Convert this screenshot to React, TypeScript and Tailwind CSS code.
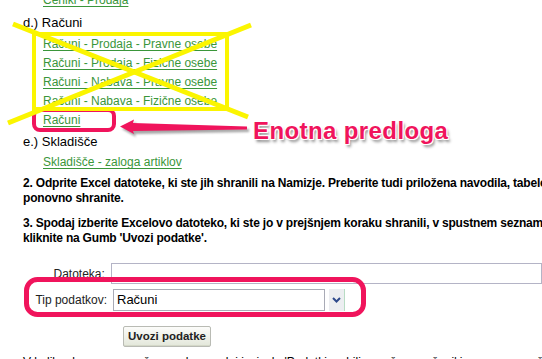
import type { ReactNode } from "react";

const links = [
  "Računi - Prodaja - Pravne osebe",
  "Računi - Prodaja - Fizične osebe",
  "Računi - Nabava - Pravne osebe",
  "Računi - Nabava - Fizične osebe",
  "Računi",
];

function Link({ children }: { children: ReactNode }) {
  return <a className="text-[#3a963a] underline underline-offset-[2px] cursor-pointer">{children}</a>;
}

// ── Annotation layer (yellow cross-out, pink highlights, arrow) ──
function Annotations() {
  return (
    <svg className="absolute inset-0 pointer-events-none" width="542" height="359" viewBox="0 0 542 359">
      <defs>
        <filter id="blur" x="-10%" y="-50%" width="120%" height="200%">
          <feGaussianBlur stdDeviation="1.2" />
        </filter>
      </defs>
      {/* pink boxes */}
      <rect x="34" y="110" width="80" height="20" rx="6" fill="none" stroke="#f0145c" strokeWidth="4" />
      <rect x="26.5" y="279.5" width="337" height="35" rx="11" fill="none" stroke="#f0145c" strokeWidth="5" />
      {/* yellow cross */}
      <rect x="34" y="34" width="193" height="75" fill="none" stroke="#fbf500" strokeWidth="4" />
      <line x1="13" y1="24" x2="248" y2="117" stroke="#fbf500" strokeWidth="5" />
      <line x1="251" y1="25" x2="8" y2="123" stroke="#fbf500" strokeWidth="5" />
      {/* arrow */}
      <polygon
        points="122,129 136,122 135,126 249,129 249,132 135,134 136,137"
        fill="rgba(0,0,0,0.35)"
        filter="url(#blur)"
      />
      <polygon points="120,126.5 134,119.5 133,123 247,126.5 247,129.5 133,131 134,134" fill="#f0145c" />
    </svg>
  );
}

export default function App() {
  return (
    <div className="relative w-[542px] h-[359px] overflow-hidden bg-white text-black font-['Liberation_Sans',Arial,sans-serif]">
      <div className="mt-[-9px]">
        <div className="pl-[43px] text-[12px] leading-[19px]">
          <Link>Ceniki - Prodaja</Link>
        </div>
        <div className="mt-[3px] pl-[23px] text-[13px] leading-[19px]">d.) Računi</div>
        <div className="mt-[3px] pl-[43px] text-[12px] leading-[19px] flex flex-col items-start">
          {links.map((l) => (
            <Link key={l}>{l}</Link>
          ))}
        </div>
        <div className="mt-[2px] pl-[23px] text-[13px] leading-[19px]">e.) Skladišče</div>
        <div className="mt-[2px] pl-[43px] text-[12px] leading-[19px]">
          <Link>Skladišče - zaloga artiklov</Link>
        </div>

        <p className="mt-[4px] pl-[23px] font-bold text-[12px] tracking-[-0.2px] leading-[15px] whitespace-nowrap">
          2. Odprite Excel datoteke, ki ste jih shranili na Namizje. Preberite tudi priložena navodila, tabele izpolnite in jih
          <br />
          ponovno shranite.
        </p>
        <p className="mt-[10px] pl-[23px] font-bold text-[12px] tracking-[-0.2px] leading-[15px] whitespace-nowrap">
          3. Spodaj izberite Excelovo datoteko, ki ste jo v prejšnjem koraku shranili, v spustnem seznamu izberite tip podatkov in
          <br />
          kliknite na Gumb 'Uvozi podatke'.
        </p>

        {/* Form */}
        <div className="mt-[17px] flex items-center gap-[6px] text-[12px]">
          <label className="w-[107px] text-right text-[#222]">Datoteka:</label>
          <div className="h-[21px] w-[440px] border border-[#b4b4c6] bg-white" />
        </div>
        <div className="mt-[5px] flex items-center gap-[6px] text-[12px]">
          <label className="w-[107px] text-right text-[#222]">Tip podatkov:</label>
          <div className="flex items-center gap-[4px]">
            <div className="h-[22px] w-[212px] border border-[#a9abb6] bg-white pl-[3px] text-[13px] leading-[20px]">Računi</div>
            <div className="h-[22px] w-[16px] bg-[#eceef1] border-r border-[#b8dcc4] flex items-center justify-center">
              <svg width="9" height="6" viewBox="0 0 9 6">
                <path d="M1 1 L4.5 4.5 L8 1" fill="none" stroke="#2e4a8c" strokeWidth="2" />
              </svg>
            </div>
          </div>
        </div>
        <div className="mt-[12px] pl-[123px]">
          <button className="h-[21px] w-[88px] rounded-[2px] border border-[#b9bbb4] bg-gradient-to-b from-[#fcfcfa] to-[#e3e7da] text-[11.5px] font-bold text-[#222] shadow-[inset_0_-1px_0_#d4d8c8]">
            Uvozi podatke
          </button>
        </div>
        <p className="mt-[8px] pl-[23px] text-[12px] leading-[15px] whitespace-nowrap">
          V kolikor bo uvoz uspešen, se bo spodaj izpisalo 'Podatki so bili uspešno uvoženi' in seznam uvoženih podatkov.
        </p>
      </div>

      <Annotations />

      <div className="absolute left-[253px] top-[119px] text-[24px] leading-[24px] font-bold tracking-[0.4px] text-[#f0145c] whitespace-nowrap [text-shadow:1px_1px_0_#fff,-1px_-1px_0_#fff,1px_-1px_0_#fff,-1px_1px_0_#fff,2px_3px_3px_rgba(0,0,0,0.45)]">
        Enotna predloga
      </div>
    </div>
  );
}
